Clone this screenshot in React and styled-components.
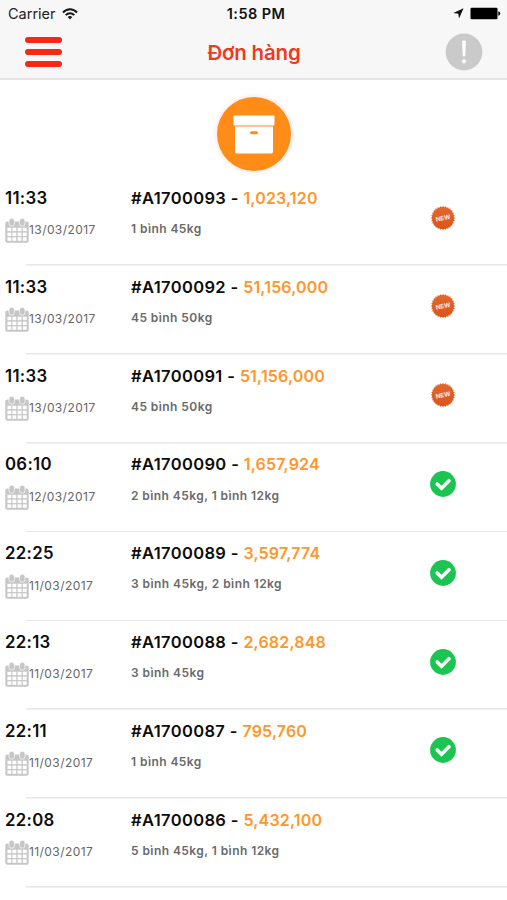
import styled, { createGlobalStyle } from "styled-components";

const orders = [
    { id: "A1700093", amount: "1,023,120", time: "11:33", date: "13/03/2017", items: "1 bình 45kg", status: "new" },
    { id: "A1700092", amount: "51,156,000", time: "11:33", date: "13/03/2017", items: "45 bình 50kg", status: "new" },
    { id: "A1700091", amount: "51,156,000", time: "11:33", date: "13/03/2017", items: "45 bình 50kg", status: "new" },
    { id: "A1700090", amount: "1,657,924", time: "06:10", date: "12/03/2017", items: "2 bình 45kg, 1 bình 12kg", status: "done" },
    { id: "A1700089", amount: "3,597,774", time: "22:25", date: "11/03/2017", items: "3 bình 45kg, 2 bình 12kg", status: "done" },
    { id: "A1700088", amount: "2,682,848", time: "22:13", date: "11/03/2017", items: "3 bình 45kg", status: "done" },
    { id: "A1700087", amount: "795,760", time: "22:11", date: "11/03/2017", items: "1 bình 45kg", status: "done" },
    { id: "A1700086", amount: "5,432,100", time: "22:08", date: "11/03/2017", items: "5 bình 45kg, 1 bình 12kg", status: "" },
];

const WifiIcon = () => (
    <svg width="16" height="12" viewBox="0 0 16 12">
        <g fill="none" stroke="#161616" strokeWidth="1.9">
            <path d="M1 4.5 C5 0.2 11 0.2 15 4.5" />
            <path d="M3.7 7.2 C6.2 4.6 9.8 4.6 12.3 7.2" />
        </g>
        <path d="M5.7 9 Q8 6.8 10.3 9 L8 11.5 Z" fill="#161616" />
    </svg>
);

const LocationIcon = () => (
    <svg width="11" height="11" viewBox="0 0 11 11">
        <path d="M10.6 0.3 L6 10.6 L5.3 5.7 L0.3 5 Z" fill="#111" />
    </svg>
);

const BatteryIcon = () => (
    <svg width="31" height="13" viewBox="0 0 31 13">
        <rect x="0.5" y="0.7" width="27" height="11.6" rx="1.2" fill="#000" />
        <path d="M28.3 4.3 Q30.2 4.8 30.2 6.5 Q30.2 8.2 28.3 8.7 Z" fill="#000" />
    </svg>
);

const AlertIcon = () => (
    <svg width="38" height="38" viewBox="0 0 38 38">
        <circle cx="19" cy="19" r="18.4" fill="#cacaca" />
        <path d="M17 9 Q17 7.6 19 7.6 Q21 7.6 21 9 L20.2 23 Q19 24.6 17.8 23 Z" fill="#fff" />
        <circle cx="19" cy="28.3" r="2.1" fill="#fff" />
    </svg>
);

const BoxIcon = () => (
    <svg width="42" height="40" viewBox="0 0 42 40">
        <rect x="0.5" y="1.5" width="41" height="10" rx="1" fill="#fff" />
        <path d="M2 12.6 H40 V37.7 Q40 39.5 38.2 39.5 H3.8 Q2 39.5 2 37.7 Z" fill="#fff" />
        <rect x="17" y="17.2" width="8" height="3" rx="1.5" fill="#ff8c17" />
    </svg>
);

const CalendarIcon = () => (
    <svg width="24" height="25" viewBox="0 0 24 25">
        <rect x="0.3" y="3.5" width="23.4" height="21.2" rx="2" fill="#c6c6c6" />
        <g fill="#c6c6c6" stroke="#fff" strokeWidth="0.7">
            <rect x="4" y="0.2" width="5.4" height="8" rx="2.6" />
            <rect x="14.6" y="0.2" width="5.4" height="8" rx="2.6" />
        </g>
        <g fill="#fff">
            {[9.7, 14.6, 19.3].map((y) =>
                [2.4, 7.4, 12.6, 17.8].map((x) => (
                    <rect key={x + "-" + y} x={x} y={y} width="3.9" height="3.5" />
                ))
            )}
        </g>
    </svg>
);

const CheckIcon = () => (
    <svg width="26" height="26" viewBox="0 0 26 26">
        <circle cx="13" cy="13" r="12.9" fill="#1cc551" />
        <path
            d="M7.2 13 L11.5 17.3 L19 9.7"
            fill="none"
            stroke="#fff"
            strokeWidth="3.6"
            strokeLinecap="round"
        />
    </svg>
);

// serrated edge of the "new" seal
const sealPoints = Array.from({ length: 56 }, (_, i) => {
    const r = i % 2 ? 10.8 : 12;
    const a = (i * Math.PI) / 28;
    return `${(13 + r * Math.cos(a)).toFixed(2)},${(13 + r * Math.sin(a)).toFixed(2)}`;
}).join(" ");

const NewIcon = () => (
    <svg width="26" height="26" viewBox="0 0 26 26">
        <defs>
            <linearGradient id="seal" x1="0" y1="0" x2="0" y2="1">
                <stop offset="0" stopColor="#e2692f" />
                <stop offset="1" stopColor="#d9541a" />
            </linearGradient>
        </defs>
        <polygon points={sealPoints} fill="url(#seal)" />
        <SealText x="13" y="15.2" transform="rotate(-12 13 13)">NEW</SealText>
    </svg>
);

function App() {
    return (
        <>
            <GlobalStyle />
            <Screen>
                <Header>
                    <StatusBar>
                        <Carrier>
                            Carrier <WifiIcon />
                        </Carrier>
                        <Clock>1:58 PM</Clock>
                        <Battery>
                            <LocationIcon />
                            <BatteryIcon />
                        </Battery>
                    </StatusBar>
                    <NavBar>
                        <MenuButton aria-label="Menu">
                            <span />
                            <span />
                            <span />
                        </MenuButton>
                        <Title>Đơn hàng</Title>
                        <AlertButton aria-label="Thông báo">
                            <AlertIcon />
                        </AlertButton>
                    </NavBar>
                </Header>
                <Banner>
                    <BoxCircle>
                        <BoxIcon />
                    </BoxCircle>
                </Banner>
                <OrderList>
                    {orders.map((order) => (
                        <OrderRow key={order.id}>
                            <When>
                                <Time>{order.time}</Time>
                                <DateLine>
                                    <CalendarIcon />
                                    <span>{order.date}</span>
                                </DateLine>
                            </When>
                            <Details>
                                <Code>
                                    #{order.id} - <Amount>{order.amount}</Amount>
                                </Code>
                                <Items>{order.items}</Items>
                            </Details>
                            <Status>
                                {order.status === "new" && <NewIcon />}
                                {order.status === "done" && <CheckIcon />}
                            </Status>
                        </OrderRow>
                    ))}
                </OrderList>
            </Screen>
        </>
    );
}
export default App;

const GlobalStyle = createGlobalStyle`
    * {
        box-sizing: border-box;
    }
    body {
        margin: 0;
        background: #fff;
        font-family: Inter, "Liberation Sans", sans-serif;
    }
    svg {
        display: block;
        flex-shrink: 0;
    }
`;
const Screen = styled.div`
    width: 100%;
    height: 900px;
    overflow: hidden;
    background: #fff;
`;
const Header = styled.header`
    height: 80px;
    background: #f7f7f7;
    border-bottom: 2px solid #e4e4e4;
`;
const StatusBar = styled.div`
    display: grid;
    grid-template-columns: 1fr auto 1fr;
    align-items: center;
    height: 27px;
    padding: 0 6px 0 8px;
`;
const Carrier = styled.div`
    display: flex;
    align-items: center;
    gap: 6px;
    font-size: 14.5px;
    color: #222;
`;
const Clock = styled.div`
    padding-left: 3px;
    font-size: 14.5px;
    font-weight: 600;
    letter-spacing: 0.4px;
    color: #111;
`;
const Battery = styled.div`
    display: flex;
    align-items: center;
    justify-content: flex-end;
    gap: 6px;
`;
const NavBar = styled.div`
    display: grid;
    grid-template-columns: 1fr auto 1fr;
    align-items: center;
    height: 50px;
    padding: 0 24px 0 25px;
`;
const MenuButton = styled.button`
    display: flex;
    flex-direction: column;
    gap: 6px;
    width: 37px;
    padding: 0;
    border: none;
    background: none;
    span {
        height: 6px;
        border-radius: 3px;
        background: #f62a10;
    }
`;
const Title = styled.h1`
    margin: 0;
    font-size: 20.5px;
    font-weight: 600;
    letter-spacing: -0.2px;
    color: #f03a20;
`;
const AlertButton = styled.button`
    justify-self: end;
    padding: 0;
    border: none;
    background: none;
`;
const Banner = styled.div`
    display: flex;
    justify-content: center;
    height: 97.2px;
    padding-top: 17px;
`;
const BoxCircle = styled.div`
    display: flex;
    align-items: center;
    justify-content: center;
    width: 74px;
    height: 74px;
    border-radius: 50%;
    background: #ff8c17;
    box-shadow: 0 0 4px 2px #ffeaea;
`;
const OrderList = styled.ul`
    margin: 0;
    padding: 0;
    list-style: none;
`;
const OrderRow = styled.li`
    display: grid;
    grid-template-columns: 126px 299px 26px;
    height: 88.8px;
    padding-left: 5px;
    background: linear-gradient(#e8e8e8, #e8e8e8) 21px 100% / 100% 1.6px no-repeat;
    background-origin: content-box;
`;
const When = styled.div`
    padding-top: 10.9px;
`;
const Time = styled.div`
    font-size: 16.8px;
    line-height: 20px;
    font-weight: 600;
    letter-spacing: 0.3px;
    color: #0c0c0c;
`;
const DateLine = styled.div`
    display: flex;
    align-items: center;
    margin-top: 10.4px;
    font-size: 12px;
    letter-spacing: 0.42px;
    color: #666;
    span {
        padding-bottom: 2.2px;
    }
`;
const Details = styled.div`
    padding-top: 10.8px;
    white-space: nowrap;
`;
const Code = styled.div`
    font-size: 16.5px;
    line-height: 20px;
    font-weight: 600;
    letter-spacing: 0.38px;
    color: #0c0c0c;
`;
const Amount = styled.span`
    font-size: 16px;
    font-weight: 560;
    letter-spacing: 0.17px;
    color: #ff962b;
`;
const Items = styled.div`
    margin-top: 13.2px;
    font-size: 12px;
    line-height: 16px;
    font-weight: 600;
    letter-spacing: 0.43px;
    color: #6a6a6a;
`;
const Status = styled.div`
    padding-top: 27.5px;
`;
const SealText = styled.text`
    font-family: Inter, "Liberation Sans", sans-serif;
    font-size: 6.2px;
    font-weight: 700;
    text-anchor: middle;
    fill: #ffe9dc;
`;
